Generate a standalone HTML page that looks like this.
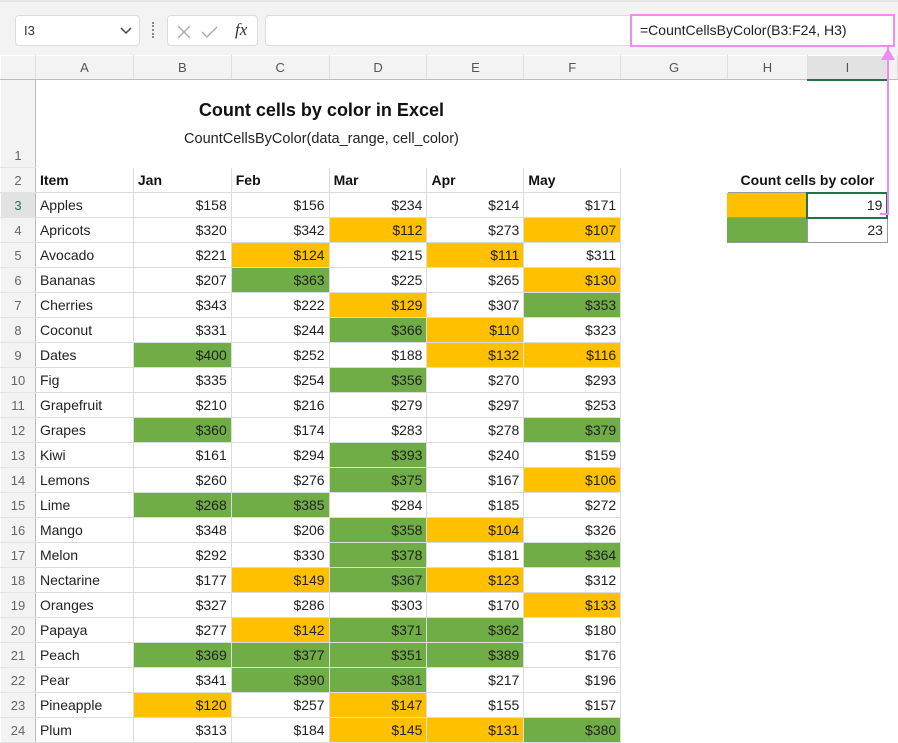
<!DOCTYPE html>
<html><head><meta charset="utf-8"><style>
*{margin:0;padding:0;box-sizing:border-box}
body{width:898px;height:741px;overflow:hidden;background:#fff;font-family:"Liberation Sans",sans-serif;position:relative}
.top{position:absolute;left:0;top:0;width:898px;height:55px;background:#f3f3f3;border-top:2px solid #e6e6e6}
.box{position:absolute;background:#fff;border:1px solid #dcdcdc;border-radius:4px}
table{position:absolute;left:0;top:55px;border-collapse:collapse;table-layout:fixed}
td{height:25px;font-size:14px;color:#222;padding:0 4px;white-space:nowrap;overflow:visible;border:1px solid transparent}
tr.ch td{height:24px;background:#f3f3f3;color:#555;text-align:center;font-size:13px;border-right:1px solid #dedede;border-bottom:1px solid #bcbcbc}
td.rh{background:#f3f3f3;color:#666;font-size:13px;text-align:center;padding:0;border-right:1px solid #bcbcbc;border-bottom:1px solid #e3e3e3}
td.t{border:1px solid #dcdcdc}
td.n{text-align:right}
.O{background:#FFC000}.G{background:#70AD47}
td.O,td.G{border-color:#dcdcdc}
b{font-weight:bold;color:#111}
</style></head><body>
<div class="top">
<div class="box" style="left:15px;top:13px;width:125px;height:31px"><span style="position:absolute;left:8px;top:7px;font-size:13px;color:#333">I3</span><svg style="position:absolute;left:104px;top:11px" width="12" height="8"><path d="M1 1 L6 6 L11 1" stroke="#444" stroke-width="1.5" fill="none"/></svg></div>
<div style="position:absolute;left:152px;top:20px;width:2px;height:16px;border-left:2px dotted #888"></div>
<div class="box" style="left:167px;top:13px;width:91px;height:31px"><svg style="position:absolute;left:8px;top:8px" width="70" height="16"><path d="M2 2L14 14M14 2L2 14" stroke="#aaa" stroke-width="1.3"/><path d="M26 8L31 13L41 3" stroke="#aaa" stroke-width="1.3" fill="none"/></svg><span style="position:absolute;left:67px;top:4px;font-family:'Liberation Serif',serif;font-style:italic;font-size:17px;color:#333">fx</span></div>
<div class="box" style="left:265px;top:13px;width:630px;height:31px"></div>
<div style="position:absolute;left:630px;top:12px;width:265px;height:33px;border:2px solid #f08cf0;background:#fff;font-size:14px;color:#222;padding:6px 0 0 8px">=CountCellsByColor(B3:F24, H3)</div>
</div>
<table>
<colgroup><col style="width:35px"><col style="width:98px"><col style="width:98px"><col style="width:98px"><col style="width:98px"><col style="width:97px"><col style="width:97px"><col style="width:107px"><col style="width:80px"><col style="width:80px"><col style="width:10px"></colgroup>
<tr class="ch"><td style="border-right:1px solid #dedede"></td><td>A</td><td>B</td><td>C</td><td>D</td><td>E</td><td>F</td><td>G</td><td>H</td><td style="background:#e2e2e2;border-bottom:2px solid #217346">I</td><td></td></tr>
<tr><td class="rh" style="height:88px;vertical-align:bottom;padding-bottom:4px">1</td><td colspan="10" style="position:relative"><div style="position:absolute;left:0;width:571px;top:19px;text-align:center;font-size:18px;font-weight:bold;color:#111">Count cells by color in Excel</div><div style="position:absolute;left:0;width:571px;top:50px;text-align:center;font-size:14.5px;color:#222">CountCellsByColor(data_range, cell_color)</div></td></tr>
<tr><td class="rh">2</td><td class="t"><b>Item</b></td><td class="t"><b>Jan</b></td><td class="t"><b>Feb</b></td><td class="t"><b>Mar</b></td><td class="t"><b>Apr</b></td><td class="t"><b>May</b></td><td></td><td colspan="2" class="t" style="text-align:center;border-color:#999"><b>Count cells by color</b></td><td></td></tr>
<tr><td class="rh" style="background:#e2e2e2;color:#217346">3</td><td class="t">Apples</td><td class="t n">$158</td><td class="t n">$156</td><td class="t n">$234</td><td class="t n">$214</td><td class="t n">$171</td><td></td><td class="O" style="border-color:#999"></td><td class="n" style="border:2px solid #217346">19</td><td></td></tr>
<tr><td class="rh">4</td><td class="t">Apricots</td><td class="t n">$320</td><td class="t n">$342</td><td class="t n O">$112</td><td class="t n">$273</td><td class="t n O">$107</td><td></td><td class="G" style="border-color:#999"></td><td class="n" style="border:1px solid #999">23</td><td></td></tr>
<tr><td class="rh">5</td><td class="t">Avocado</td><td class="t n">$221</td><td class="t n O">$124</td><td class="t n">$215</td><td class="t n O">$111</td><td class="t n">$311</td><td></td><td></td><td></td><td></td></tr>
<tr><td class="rh">6</td><td class="t">Bananas</td><td class="t n">$207</td><td class="t n G">$363</td><td class="t n">$225</td><td class="t n">$265</td><td class="t n O">$130</td><td></td><td></td><td></td><td></td></tr>
<tr><td class="rh">7</td><td class="t">Cherries</td><td class="t n">$343</td><td class="t n">$222</td><td class="t n O">$129</td><td class="t n">$307</td><td class="t n G">$353</td><td></td><td></td><td></td><td></td></tr>
<tr><td class="rh">8</td><td class="t">Coconut</td><td class="t n">$331</td><td class="t n">$244</td><td class="t n G">$366</td><td class="t n O">$110</td><td class="t n">$323</td><td></td><td></td><td></td><td></td></tr>
<tr><td class="rh">9</td><td class="t">Dates</td><td class="t n G">$400</td><td class="t n">$252</td><td class="t n">$188</td><td class="t n O">$132</td><td class="t n O">$116</td><td></td><td></td><td></td><td></td></tr>
<tr><td class="rh">10</td><td class="t">Fig</td><td class="t n">$335</td><td class="t n">$254</td><td class="t n G">$356</td><td class="t n">$270</td><td class="t n">$293</td><td></td><td></td><td></td><td></td></tr>
<tr><td class="rh">11</td><td class="t">Grapefruit</td><td class="t n">$210</td><td class="t n">$216</td><td class="t n">$279</td><td class="t n">$297</td><td class="t n">$253</td><td></td><td></td><td></td><td></td></tr>
<tr><td class="rh">12</td><td class="t">Grapes</td><td class="t n G">$360</td><td class="t n">$174</td><td class="t n">$283</td><td class="t n">$278</td><td class="t n G">$379</td><td></td><td></td><td></td><td></td></tr>
<tr><td class="rh">13</td><td class="t">Kiwi</td><td class="t n">$161</td><td class="t n">$294</td><td class="t n G">$393</td><td class="t n">$240</td><td class="t n">$159</td><td></td><td></td><td></td><td></td></tr>
<tr><td class="rh">14</td><td class="t">Lemons</td><td class="t n">$260</td><td class="t n">$276</td><td class="t n G">$375</td><td class="t n">$167</td><td class="t n O">$106</td><td></td><td></td><td></td><td></td></tr>
<tr><td class="rh">15</td><td class="t">Lime</td><td class="t n G">$268</td><td class="t n G">$385</td><td class="t n">$284</td><td class="t n">$185</td><td class="t n">$272</td><td></td><td></td><td></td><td></td></tr>
<tr><td class="rh">16</td><td class="t">Mango</td><td class="t n">$348</td><td class="t n">$206</td><td class="t n G">$358</td><td class="t n O">$104</td><td class="t n">$326</td><td></td><td></td><td></td><td></td></tr>
<tr><td class="rh">17</td><td class="t">Melon</td><td class="t n">$292</td><td class="t n">$330</td><td class="t n G">$378</td><td class="t n">$181</td><td class="t n G">$364</td><td></td><td></td><td></td><td></td></tr>
<tr><td class="rh">18</td><td class="t">Nectarine</td><td class="t n">$177</td><td class="t n O">$149</td><td class="t n G">$367</td><td class="t n O">$123</td><td class="t n">$312</td><td></td><td></td><td></td><td></td></tr>
<tr><td class="rh">19</td><td class="t">Oranges</td><td class="t n">$327</td><td class="t n">$286</td><td class="t n">$303</td><td class="t n">$170</td><td class="t n O">$133</td><td></td><td></td><td></td><td></td></tr>
<tr><td class="rh">20</td><td class="t">Papaya</td><td class="t n">$277</td><td class="t n O">$142</td><td class="t n G">$371</td><td class="t n G">$362</td><td class="t n">$180</td><td></td><td></td><td></td><td></td></tr>
<tr><td class="rh">21</td><td class="t">Peach</td><td class="t n G">$369</td><td class="t n G">$377</td><td class="t n G">$351</td><td class="t n G">$389</td><td class="t n">$176</td><td></td><td></td><td></td><td></td></tr>
<tr><td class="rh">22</td><td class="t">Pear</td><td class="t n">$341</td><td class="t n G">$390</td><td class="t n G">$381</td><td class="t n">$217</td><td class="t n">$196</td><td></td><td></td><td></td><td></td></tr>
<tr><td class="rh">23</td><td class="t">Pineapple</td><td class="t n O">$120</td><td class="t n">$257</td><td class="t n O">$147</td><td class="t n">$155</td><td class="t n">$157</td><td></td><td></td><td></td><td></td></tr>
<tr><td class="rh">24</td><td class="t">Plum</td><td class="t n">$313</td><td class="t n">$184</td><td class="t n O">$145</td><td class="t n O">$131</td><td class="t n G">$380</td><td></td><td></td><td></td><td></td></tr>
</table>
<svg style="position:absolute;left:878px;top:44px" width="20" height="175"><path d="M10 2 L10 170 L2 170" stroke="#f08cf0" stroke-width="2" fill="none"/><path d="M3 16 L10 4 L17 16 Z" fill="#f08cf0"/></svg>
</body></html>
